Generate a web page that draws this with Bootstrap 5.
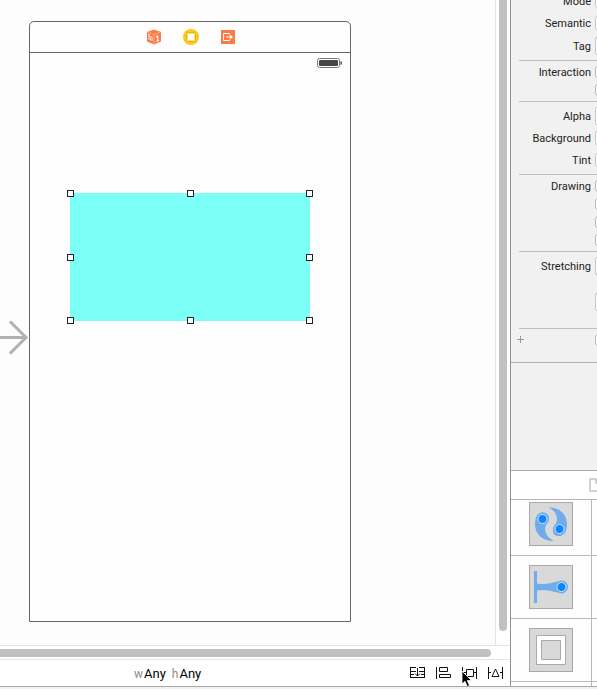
<!DOCTYPE html>
<html lang="en">
<head>
<meta charset="utf-8">
<meta name="viewport" content="width=device-width, initial-scale=1">
<title>Interface Builder</title>
<link href="https://cdn.jsdelivr.net/npm/bootstrap@5.3.0/dist/css/bootstrap.min.css" rel="stylesheet">
<style>
body{font-family:Roboto,"Liberation Sans",sans-serif;font-size:11px;line-height:16px;color:#222;background:#fff;cursor:default}
svg{display:block;flex:none}
button{border:0;background:none;padding:0;color:inherit}
.canvas{background:#fdfdfd}
.device{width:322px;height:601px;margin:21px 0 0 29px;border:1px solid #666;border-radius:5px 5px 0 0;background:#fefefe}
.dock{height:31px;border-bottom:1px solid #666;gap:22px;padding-left:2px}
.statusline{padding:5px 7px}
.entry{left:0;top:320px}
.selection{left:70px;top:193px;width:240px;height:128px;padding:0 1px 1px 0;background:#7cfff7}
.handle{width:7px;height:7px;border:1px solid #222;background:#fff;transform:translate(-3px,-3px)}
.gutter{width:15px;border-left:1px solid #e4e4e4;padding-left:3px}
.vthumb{width:8px;height:calc(100% - 14px);background:#c1c1c1;border-radius:0 0 4px 4px}
.hgutter{height:15px;border-top:1px solid #e4e4e4;border-bottom:1px solid #e4e4e4;padding:3px 19px 0 0}
.hthumb{height:8px;background:#c1c1c1;border-radius:0 4px 4px 0}
.toolbar{height:26px}
.sizeclass{margin-left:134px;padding-top:2px;font-size:13px;color:#000}
.sizeclass span{color:#8c8c8c;font-size:12px;margin-right:1px}
.sizeclass .hspace{margin-left:6px}
.tools{gap:10px;padding-right:6px}
.pointer{left:461px;top:10px;z-index:2}
.side{width:87px;border-left:1px solid #929292}
.inspector{background:#f1f1f1}
.attrs{margin-top:-12px}
.group{margin-left:8px;border-bottom:1px solid #c0c0c0;padding:2px 0}
.group.roomy{padding:3px 0}
.attr{height:22px;gap:4px}
.attr.tall{height:24px}
.attr.tick{height:18px}
.attr label,.attr .name{width:72px;text-align:right;flex:none;padding-top:2px}
.attr input[type=number],.attr select{width:110px;height:18px;flex:none;border:1px solid #c8c8c8;background:#fff;border-radius:2px;padding:0 4px;appearance:none}
.attr select{height:16px;border-radius:4px}
.attr input[type=checkbox]{width:12px;height:12px;flex:none;margin:0;border:1px solid #b9b9b9;border-radius:3px;background:#fff;appearance:none}
.stretch{padding:3px 0 15px}
.stretch .attr + .attr{margin-top:14px}
.addrow{padding-bottom:11px;border-bottom:1px solid #b0b0b0}
.addrow .name{width:80px;text-align:left;padding-left:6px}
.library{height:216px;border-top:1px solid #aaa;background:#fefefe}
.libhead{height:29px;border-bottom:1px solid #b5b5b5;padding-left:78px}
.liblist{margin-top:-7px}
.libitem{height:63px;border-bottom:1px solid #b9b9b9}
.thumbcell{width:81px;border-right:1px solid #b9b9b9;flex:none}
.tile{width:44px;height:44px;border:1px solid #a8a8a8;background:#d9d9d9}
.baseline{height:3px;border-top:1px solid #aaa;background:#f0f0f0}
</style>
<script src="https://cdn.jsdelivr.net/npm/bootstrap@5.3.0/dist/js/bootstrap.bundle.min.js"></script>
</head>
<body class="vh-100 d-flex flex-column overflow-hidden">
<div class="d-flex flex-grow-1 overflow-hidden">
  <main class="d-flex flex-column flex-grow-1 overflow-hidden">
    <div class="d-flex flex-grow-1 overflow-hidden">
      <section class="canvas flex-grow-1 position-relative overflow-hidden" aria-label="Canvas">
        <svg class="entry position-absolute" width="29" height="36" viewBox="0 0 29 36" fill="none" stroke="#b1b1b1" stroke-width="3"><path d="M0 17.500H26M10 1.500L26 17.500L10 33.500"/></svg>
        <div class="device">
          <div class="dock d-flex justify-content-center align-items-center">
            <button type="button" aria-label="First responder"><svg width="14" height="16" viewBox="1 0 14 16"><path d="M8 .5L15 3v9.500L8 15.500L1 12.500V3Z" fill="#fa7b45"/><path d="M1 3l7 2.500L15 3M8 5.500v10" fill="none" stroke="#fdb495" stroke-width=".8"/><path d="M3 11V7l3 1v4M2 5.500l2 .7M4.500 9v2.500" fill="none" stroke="#fff" stroke-width=".8"/><path d="M10 8.300l1.700-1.300v5M10.300 12.300l2.700-1" fill="none" stroke="#fff" stroke-width="1.100"/></svg></button>
            <button type="button" aria-label="View controller"><svg width="16" height="16" viewBox="0 0 16 16"><circle cx="8" cy="8" r="8" fill="#fbc91a"/><rect x="3.500" y="3.500" width="9" height="9" rx="1" fill="#fde27c" stroke="#eeb200"/><rect x="5" y="5" width="6" height="6" fill="#fff"/></svg></button>
            <button type="button" aria-label="Exit"><svg width="14" height="14" viewBox="0 0 14 14"><path d="M0 0h14v14H0z" fill="#fa7b45"/><path d="M8.500 4.500V3.500h-6v7h6V9.500" fill="none" stroke="#fff"/><path d="M5.500 6.500H9V4.500L12 7L9 9.500V7.500H5.500z" fill="#fff"/></svg></button>
          </div>
          <div class="statusline d-flex justify-content-end"><svg width="26" height="10" viewBox="0 0 26 10"><rect x=".5" y=".5" width="22" height="9" rx="2" fill="#fff" stroke="#777"/><rect x="2" y="2" width="19" height="6" rx="1" fill="#484848"/><path d="M23.500 3q1.500 0 1.500 2T23.500 7z" fill="#484848"/></svg></div>
        </div>
        <div class="selection position-absolute">
          <div class="position-relative w-100 h-100">
            <i class="handle position-absolute top-0 start-0"></i><i class="handle position-absolute top-0 start-50"></i><i class="handle position-absolute top-0 start-100"></i>
            <i class="handle position-absolute top-50 start-0"></i><i class="handle position-absolute top-50 start-100"></i>
            <i class="handle position-absolute top-100 start-0"></i><i class="handle position-absolute top-100 start-50"></i><i class="handle position-absolute top-100 start-100"></i>
          </div>
        </div>
      </section>
      <div class="gutter flex-shrink-0"><div class="vthumb"></div></div>
    </div>
    <div class="hgutter flex-shrink-0"><div class="hthumb"></div></div>
    <div class="toolbar d-flex align-items-center position-relative flex-shrink-0">
      <button type="button" class="sizeclass d-flex align-items-baseline me-auto"><span>w</span>Any<span class="hspace">h</span>Any</button>
      <div class="tools d-flex align-items-center" role="toolbar" aria-label="Auto layout">
        <button type="button" aria-label="Stack"><svg width="16" height="12" viewBox="0 0 16 12" fill="none" stroke="#111"><path d="M.5 0v11M14.500 0v11M0 .5h6M9 .5h6M0 4.500h6M9 4.500h6M0 7.500h4M11 7.500h4M0 10.500h15M7.500 1v8M5 6.500l2.500 2.500 2.500-2.500"/></svg></button>
        <button type="button" aria-label="Align"><svg width="16" height="12" viewBox="0 0 16 12" fill="none" stroke="#111"><path d="M.5 0v12M3.500 .5h8v4h-8zM3.500 7.500h11v3h-11z"/></svg></button>
        <button type="button" aria-label="Pin"><svg width="16" height="12" viewBox="0 0 16 12" fill="none" stroke="#111"><path d="M.5 0v12M14.500 0v12M0 5.500h4M11 5.500h4M4.500 2.500h7v7h-7z"/></svg></button>
        <button type="button" aria-label="Resolve issues"><svg width="16" height="12" viewBox="0 0 16 12" fill="none" stroke="#111"><path d="M.5 0v12M14.500 0v12M0 5.500h3M12 5.500h3M7.500 2l3.500 7.500h-7z"/></svg></button>
      </div>
      <svg class="pointer position-absolute" width="12" height="18" viewBox="0 0 12 18"><path d="M1 1v13l3-2.700L6.200 16.500l2.300-1L6.300 10.500H10.500z" fill="#000" stroke="#fff" stroke-width=".8"/></svg>
    </div>
  </main>
  <aside class="side d-flex flex-column flex-shrink-0 overflow-hidden">
    <form class="inspector flex-grow-1 overflow-hidden">
      <div class="attrs">
        <div class="group">
          <div class="attr d-flex align-items-center"><label for="mode">Mode</label><select id="mode"><option>Scale To Fill</option></select></div>
          <div class="attr d-flex align-items-center"><label for="semantic">Semantic</label><select id="semantic"><option>Unspecified</option></select></div>
          <div class="attr tall d-flex align-items-center"><label for="tag">Tag</label><input id="tag" type="number" value="0"></div>
        </div>
        <div class="group">
          <div class="attr tick d-flex align-items-center"><label for="act">Interaction</label><input id="act" type="checkbox"></div>
          <div class="attr tick d-flex align-items-center"><span class="name"></span><input type="checkbox" aria-label="Multiple touch"></div>
        </div>
        <div class="group roomy">
          <div class="attr d-flex align-items-center"><label for="alpha">Alpha</label><input id="alpha" type="number" value="1"></div>
          <div class="attr d-flex align-items-center"><label for="bg">Background</label><select id="bg"><option></option></select></div>
          <div class="attr d-flex align-items-center"><label for="tint">Tint</label><select id="tint"><option></option></select></div>
        </div>
        <div class="group">
          <div class="attr tick d-flex align-items-center"><label for="draw">Drawing</label><input id="draw" type="checkbox"></div>
          <div class="attr tick d-flex align-items-center"><span class="name"></span><input type="checkbox" aria-label="Hidden"></div>
          <div class="attr tick d-flex align-items-center"><span class="name"></span><input type="checkbox" aria-label="Clears context"></div>
          <div class="attr tick d-flex align-items-center"><span class="name"></span><input type="checkbox" aria-label="Clip subviews"></div>
        </div>
        <div class="group stretch">
          <div class="attr d-flex align-items-center"><label for="sx">Stretching</label><input id="sx" type="number" value="0"></div>
          <div class="attr d-flex align-items-center"><span class="name"></span><input type="number" value="1" aria-label="Width"></div>
        </div>
        <div class="addrow">
          <div class="attr d-flex align-items-center"><span class="name"><button type="button" aria-label="Add"><svg width="8" height="8" viewBox="0 0 8 8" stroke="#999"><path d="M0 3.500h7M3.500 0v7"/></svg></button></span><input type="checkbox" aria-label="Installed"></div>
        </div>
      </div>
    </form>
    <section class="library flex-shrink-0 overflow-hidden" aria-label="Object library">
      <div class="libhead d-flex align-items-center position-relative bg-white"><button type="button" aria-label="File templates"><svg width="12" height="14" viewBox="0 0 12 14" fill="none" stroke="#c4c4c4" stroke-width="1.500"><path d="M1 1h6l4 4v8H1zM7 1v4h4"/></svg></button></div>
      <div class="liblist">
        <div class="libitem d-flex"><div class="thumbcell d-flex align-items-center justify-content-center">
          <button type="button" class="tile" aria-label="Rotation gesture"><svg width="42" height="42" viewBox="0 0 42 42"><path d="M18.500 4.500C30 4 37 12 37 21C37 28 34 33 29 33C24 33 21.500 29 24 25C29 17 28 9 18.500 4.500Z" fill="#6eaceb"/><path d="M24 38C12 38 5 31 5 21C5 14 8 9.500 13 9.500C18 9.500 20 14 18 18C13 25 14 33 24 38Z" fill="#6eaceb"/><circle cx="12.500" cy="16" r="6.500" fill="#6eaceb"/><circle cx="29.500" cy="26" r="6.500" fill="#6eaceb"/><g fill="#0a84ff" stroke="#d8e8f8"><circle cx="12.500" cy="16" r="4.500"/><circle cx="29.500" cy="26" r="4.500"/></g></svg></button>
        </div></div>
        <div class="libitem d-flex"><div class="thumbcell d-flex align-items-center justify-content-center">
          <button type="button" class="tile" aria-label="Screen edge pan gesture"><svg width="42" height="42" viewBox="0 0 42 42"><path d="M4 5h3v32H4zM7 17.500C16 19 20 17 28 15.500V26.500C20 25 16 23 7 24.500z" fill="#6eaceb"/><circle cx="31.500" cy="21" r="6.500" fill="#6eaceb"/><circle cx="31.500" cy="21" r="4.500" fill="#0a84ff" stroke="#d8e8f8"/></svg></button>
        </div></div>
        <div class="libitem d-flex"><div class="thumbcell d-flex align-items-center justify-content-center">
          <button type="button" class="tile" aria-label="Container view"><svg width="42" height="42" viewBox="0 0 42 42" stroke="#aaa"><path d="M6.500 6.500h29v29h-29z" fill="#fff"/><path d="M11.500 11.500h19v19h-19z" fill="#d9d9d9"/></svg></button>
        </div></div>
        <div class="libitem d-flex"><div class="thumbcell"></div></div>
      </div>
    </section>
  </aside>
</div>
<div class="baseline flex-shrink-0"></div>
</body>
</html>
